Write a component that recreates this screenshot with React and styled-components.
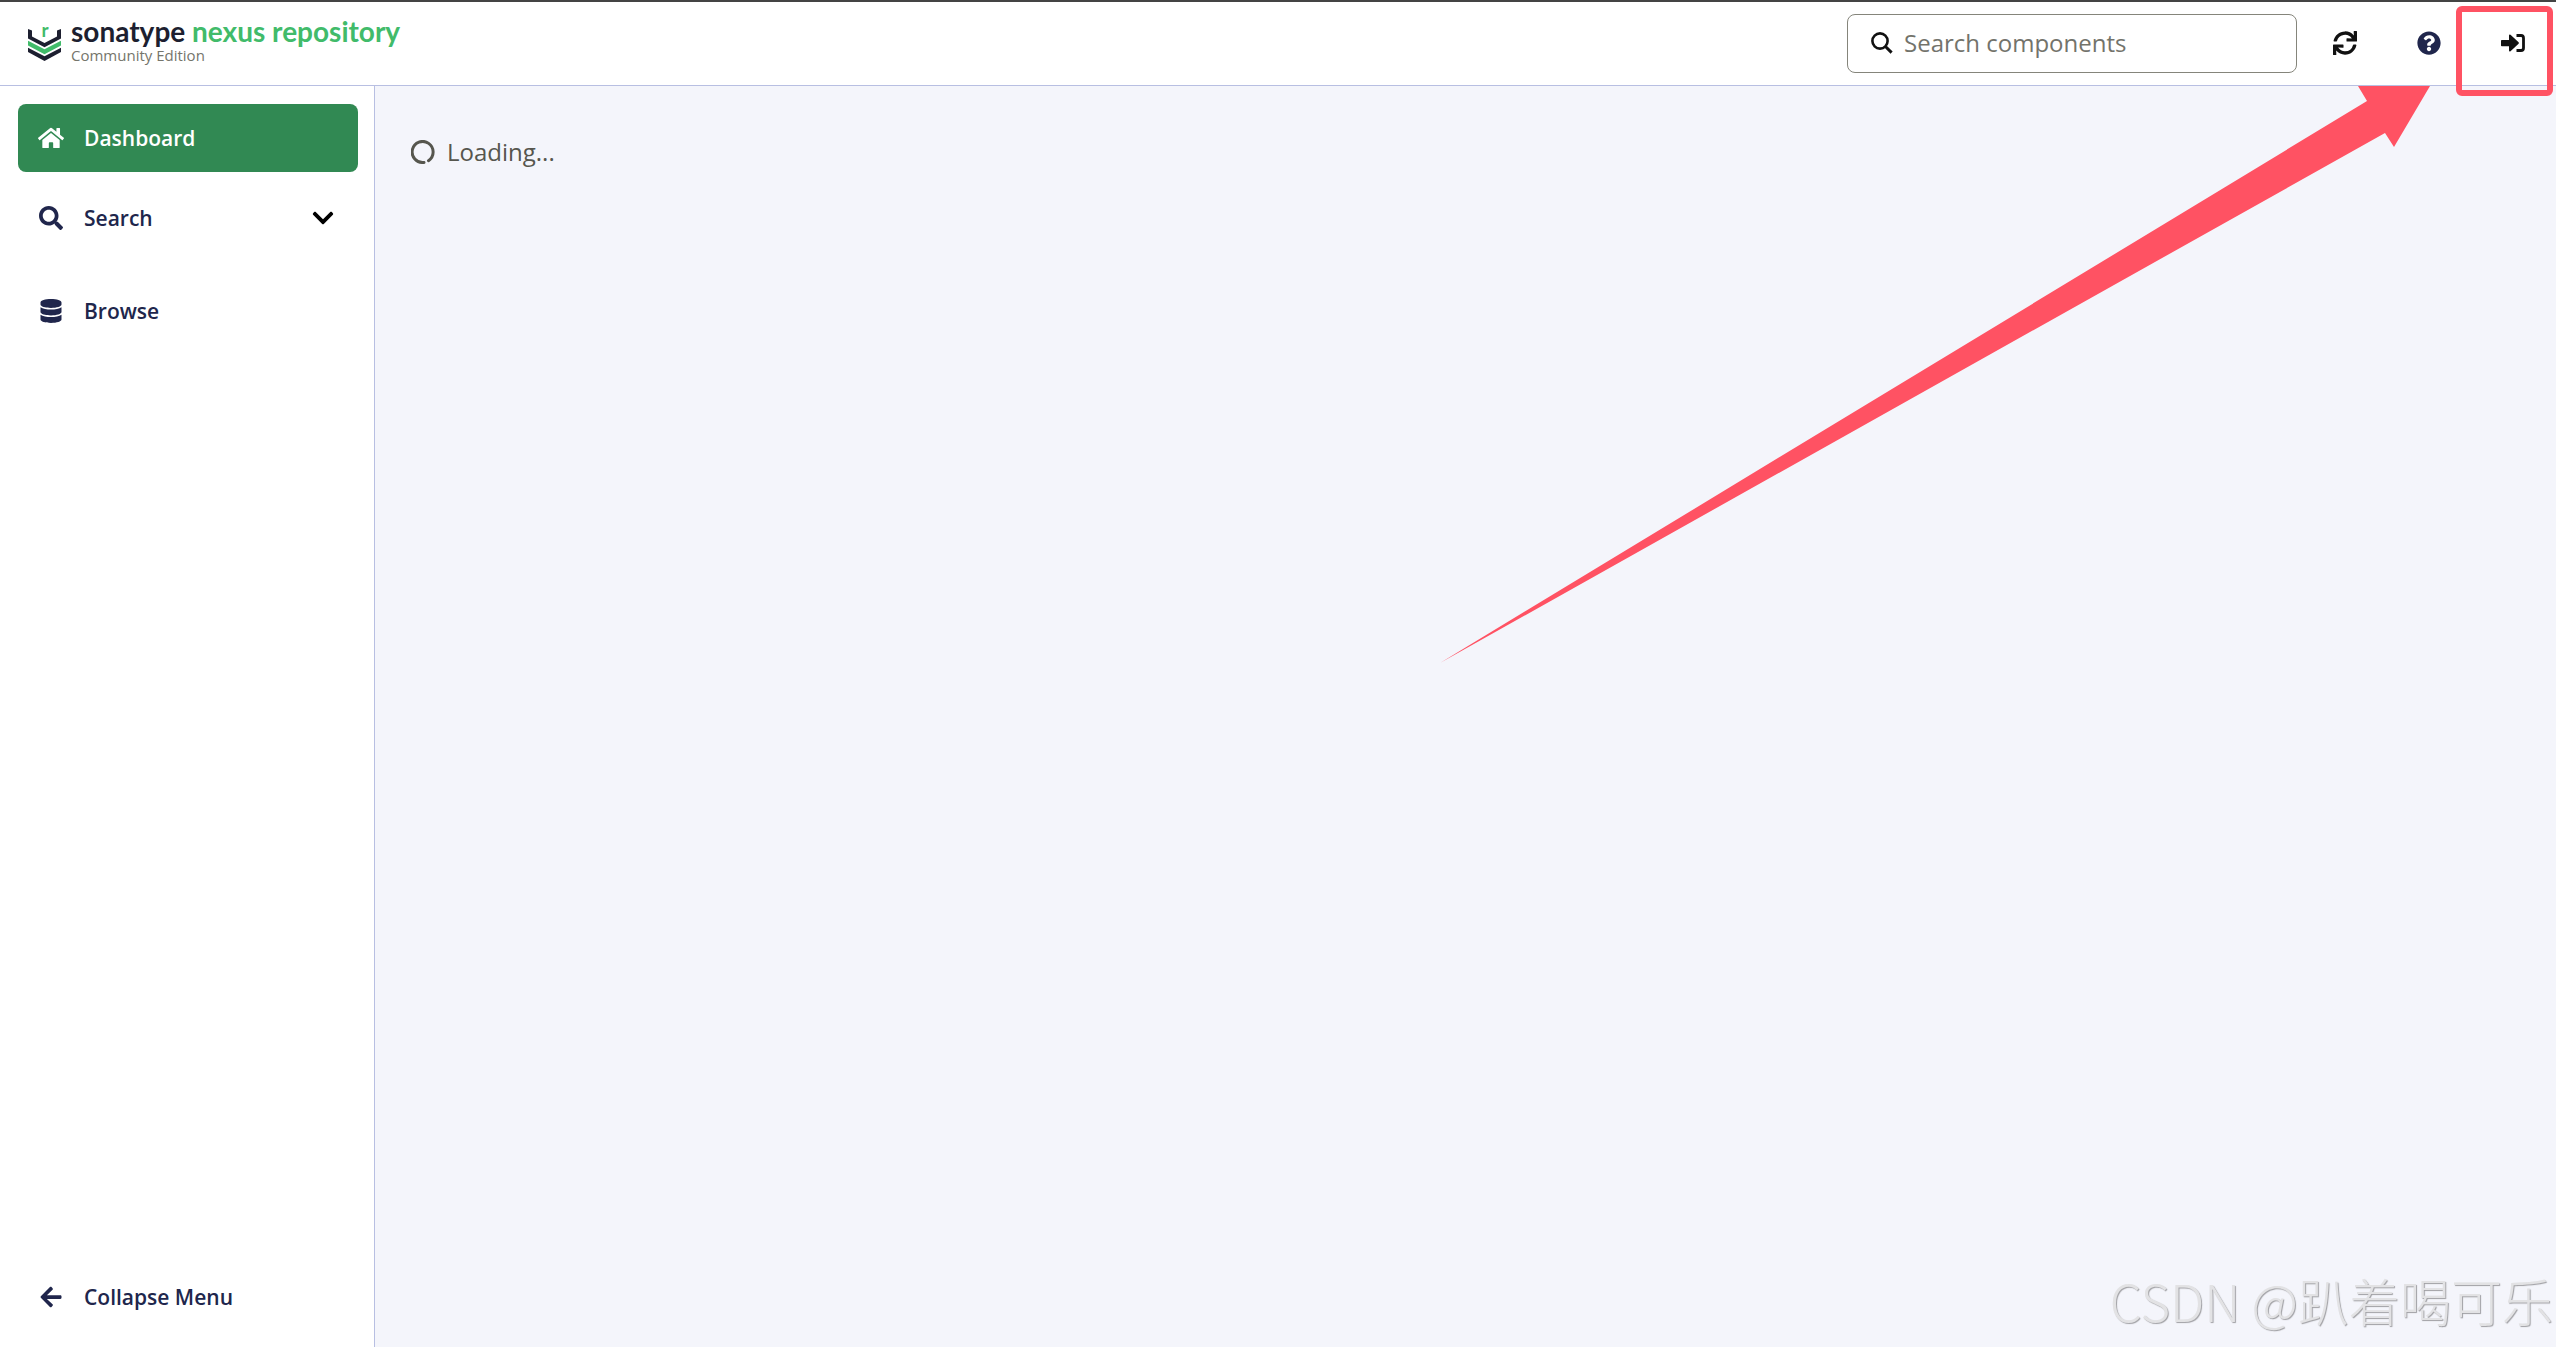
import styled, { createGlobalStyle } from "styled-components"
import { FaHome, FaSearch, FaDatabase, FaSync, FaQuestionCircle, FaArrowLeft, FaChevronDown } from "react-icons/fa"

const App = () => {
    return (
        <>
        <GlobalStyle />
        <Page>
            <Header>
                <Brand href="#">
                    <LogoMark />
                    <BrandText>
                        <BrandName>sonatype <span>nexus repository</span></BrandName>
                        <Edition>Community Edition</Edition>
                    </BrandText>
                </Brand>
                <SearchBox>
                    <svg width="22" height="22" viewBox="0 0 22 22" fill="none" stroke="#111" strokeWidth="2.6">
                        <circle cx="9" cy="9" r="7.6" />
                        <path d="M14.2 14.2L20.6 20.6" strokeWidth="3" />
                    </svg>
                    <input type="text" aria-label="Search components" placeholder="Search components" />
                </SearchBox>
                <Actions>
                    <IconButton aria-label="Refresh"><FaSync /></IconButton>
                    <IconButton aria-label="Help" $color="#20264c"><FaQuestionCircle /></IconButton>
                    <IconButton aria-label="Sign in"><SignInIcon /></IconButton>
                </Actions>
            </Header>

            <Body>
                <Sidebar>
                    <NavLink href="#" $active><FaHome />Dashboard</NavLink>
                    <NavButton>
                        <FaSearch />Search
                        <Chevron />
                    </NavButton>
                    <NavLink href="#" $spaced><FaDatabase />Browse</NavLink>
                    <NavButton $bottom><FaArrowLeft />Collapse Menu</NavButton>
                </Sidebar>
                <Content>
                    <Loading role="status">
                        <Spinner />
                        Loading...
                    </Loading>
                </Content>
                <Arrow />
            </Body>
        </Page>
        <Highlight />
        <Watermark>CSDN @趴着喝可乐</Watermark>
        </>
    )
}

const LogoMark = () => (
    <svg width="33" height="48" viewBox="0 -8 33 48">
        <path d="M0 4L4 5.5V11.500L16.500 18L29 11.500V5.500L33 4V13.500L16.500 22.300L0 13.500Z" fill="#1d1f30" />
        <path d="M0 15.700L16.500 24.300L33 15.700V20.600L16.500 29.300L0 20.600Z" fill="#41bb6a" />
        <path d="M0 22.700L16.500 31.300L33 22.700V27L16.500 36L0 27Z" fill="#1d1f30" />
        <text x="17" y="12" textAnchor="middle" fontFamily="Lato, sans-serif" fontWeight="700" fontSize="19" fill="#41bb6a">r</text>
    </svg>
)

const SignInIcon = () => (
    <svg width="24" height="18" viewBox="0 0 24 18">
        <path d="M0.800 6H8V1.500Q8.200 0 9.500 0.800L17.600 8.300Q18.200 9 17.600 9.700L9.500 17.200Q8.200 18 8 16.500V12.300H0.800Q0 12.300 0 11.500V6.800Q0 6 0.800 6Z" fill="#111" />
        <path d="M15.500 1.500H20Q22.500 1.500 22.500 4V14Q22.500 16.500 20 16.500H15.500" fill="none" stroke="#111" strokeWidth="2.800" />
    </svg>
)

const Spinner = () => (
    <svg width="24" height="24" viewBox="0 0 24 24" fill="none" stroke="#56564e" strokeWidth="3" strokeLinecap="round">
        <path d="M13 22.400A10.500 10.500 0 1 1 17.500 20.700" />
    </svg>
)

// hand drawn pointer going up to the sign in button
const Arrow = () => (
    <ArrowSvg width="990" height="577" viewBox="0 0 990 577" aria-hidden="true">
        <path d="M918 0H990L954 61L945 47L0 577L927 15Z" fill="#ff5263" />
    </ArrowSvg>
)

const GlobalStyle = createGlobalStyle`
    * {
        box-sizing: border-box;
    }

    body {
        margin: 0;
        font-family: "Open Sans", sans-serif;
        background: #fff;
    }

    button, input {
        font: inherit;
    }
`

const Page = styled.div`
    display: flex;
    flex-direction: column;
    min-height: 100vh;
    border-top: 2px solid #444;
`

const Header = styled.header`
    display: flex;
    align-items: center;
    height: 84px;
    padding: 0 13px 0 28px;
    border-bottom: 1px solid #b8bfe2;
`

const Brand = styled.a`
    display: flex;
    align-items: center;
    gap: 10px;
    margin-right: auto;
    padding-bottom: 6px;
    text-decoration: none;
`

const BrandText = styled.div`
    display: flex;
    flex-direction: column;
`

const BrandName = styled.div`
    font-family: Lato, sans-serif;
    font-weight: 700;
    font-size: 28px;
    line-height: 28px;
    color: #1d1f30;

    span {
        color: #41bb6a;
    }
`

const Edition = styled.div`
    font-size: 15px;
    line-height: 20px;
    color: #75756b;
`

const SearchBox = styled.label`
    display: flex;
    align-items: center;
    gap: 11px;
    width: 450px;
    height: 59px;
    padding: 0 23px 2px;
    border: 1px solid #85857b;
    border-radius: 8px;

    input {
        flex: 1;
        min-width: 0;
        padding: 0;
        border: 0;
        outline: 0;
        background: none;
        font-size: 24px;
        color: #333;
    }

    input::placeholder {
        color: #73736b;
        opacity: 1;
    }
`

const Actions = styled.div`
    display: flex;
    gap: 24px;
    margin-left: 18px;
    padding-bottom: 2px;
`

const IconButton = styled.button`
    display: flex;
    align-items: center;
    justify-content: center;
    width: 60px;
    height: 60px;
    padding: 0;
    border: 0;
    background: none;
    color: ${(p) => p.$color || "#111"};
    font-size: 24px;
`

const Body = styled.div`
    position: relative;
    display: flex;
    flex: 1;
`

const Sidebar = styled.nav`
    display: flex;
    flex-direction: column;
    width: 375px;
    padding: 18px 16px 16px 18px;
    border-right: 1px solid #b8bfe2;
`

const NavLink = styled.a`
    display: flex;
    align-items: center;
    gap: 20px;
    height: 68px;
    margin-top: ${(p) => (p.$spaced ? "25px" : "0")};
    padding: 0 20px;
    border: 0;
    border-radius: 8px;
    background: ${(p) => (p.$active ? "#318953" : "none")};
    color: ${(p) => (p.$active ? "#fff" : "#20264c")};
    font-size: 21px;
    font-weight: 600;
    text-decoration: none;

    svg:first-child {
        width: 26px;
        height: ${(p) => (p.$active ? "26px" : "24px")};
    }
`

const NavButton = styled(NavLink).attrs({ as: "button", type: "button" })`
    margin-top: ${(p) => (p.$bottom ? "auto" : "12px")};
`

const Chevron = styled(FaChevronDown)`
    margin: 0 3px 0 auto;
    color: #000;
    font-size: 24px;
`

const Content = styled.main`
    flex: 1;
    padding: 48px 36px;
    background: #f4f5fb;
`

const Loading = styled.div`
    display: flex;
    align-items: center;
    gap: 12px;
    font-size: 24px;
    line-height: 36px;
    color: #56564e;
`

const ArrowSvg = styled.svg`
    position: absolute;
    top: 0;
    right: 126px;
    pointer-events: none;
`

const Highlight = styled.div`
    position: absolute;
    top: 6px;
    right: 3px;
    width: 97px;
    height: 90px;
    border: 6px solid #ff5263;
    border-radius: 6px;
    pointer-events: none;
`

const Watermark = styled.div`
    position: fixed;
    right: 3px;
    bottom: 11px;
    font-family: "Noto Sans CJK SC", sans-serif;
    font-weight: 300;
    font-size: 51px;
    line-height: 72px;
    color: #e2e2e4;
    text-shadow: 1px 1px 1px #a0a0a4;
    pointer-events: none;
`

export default App
